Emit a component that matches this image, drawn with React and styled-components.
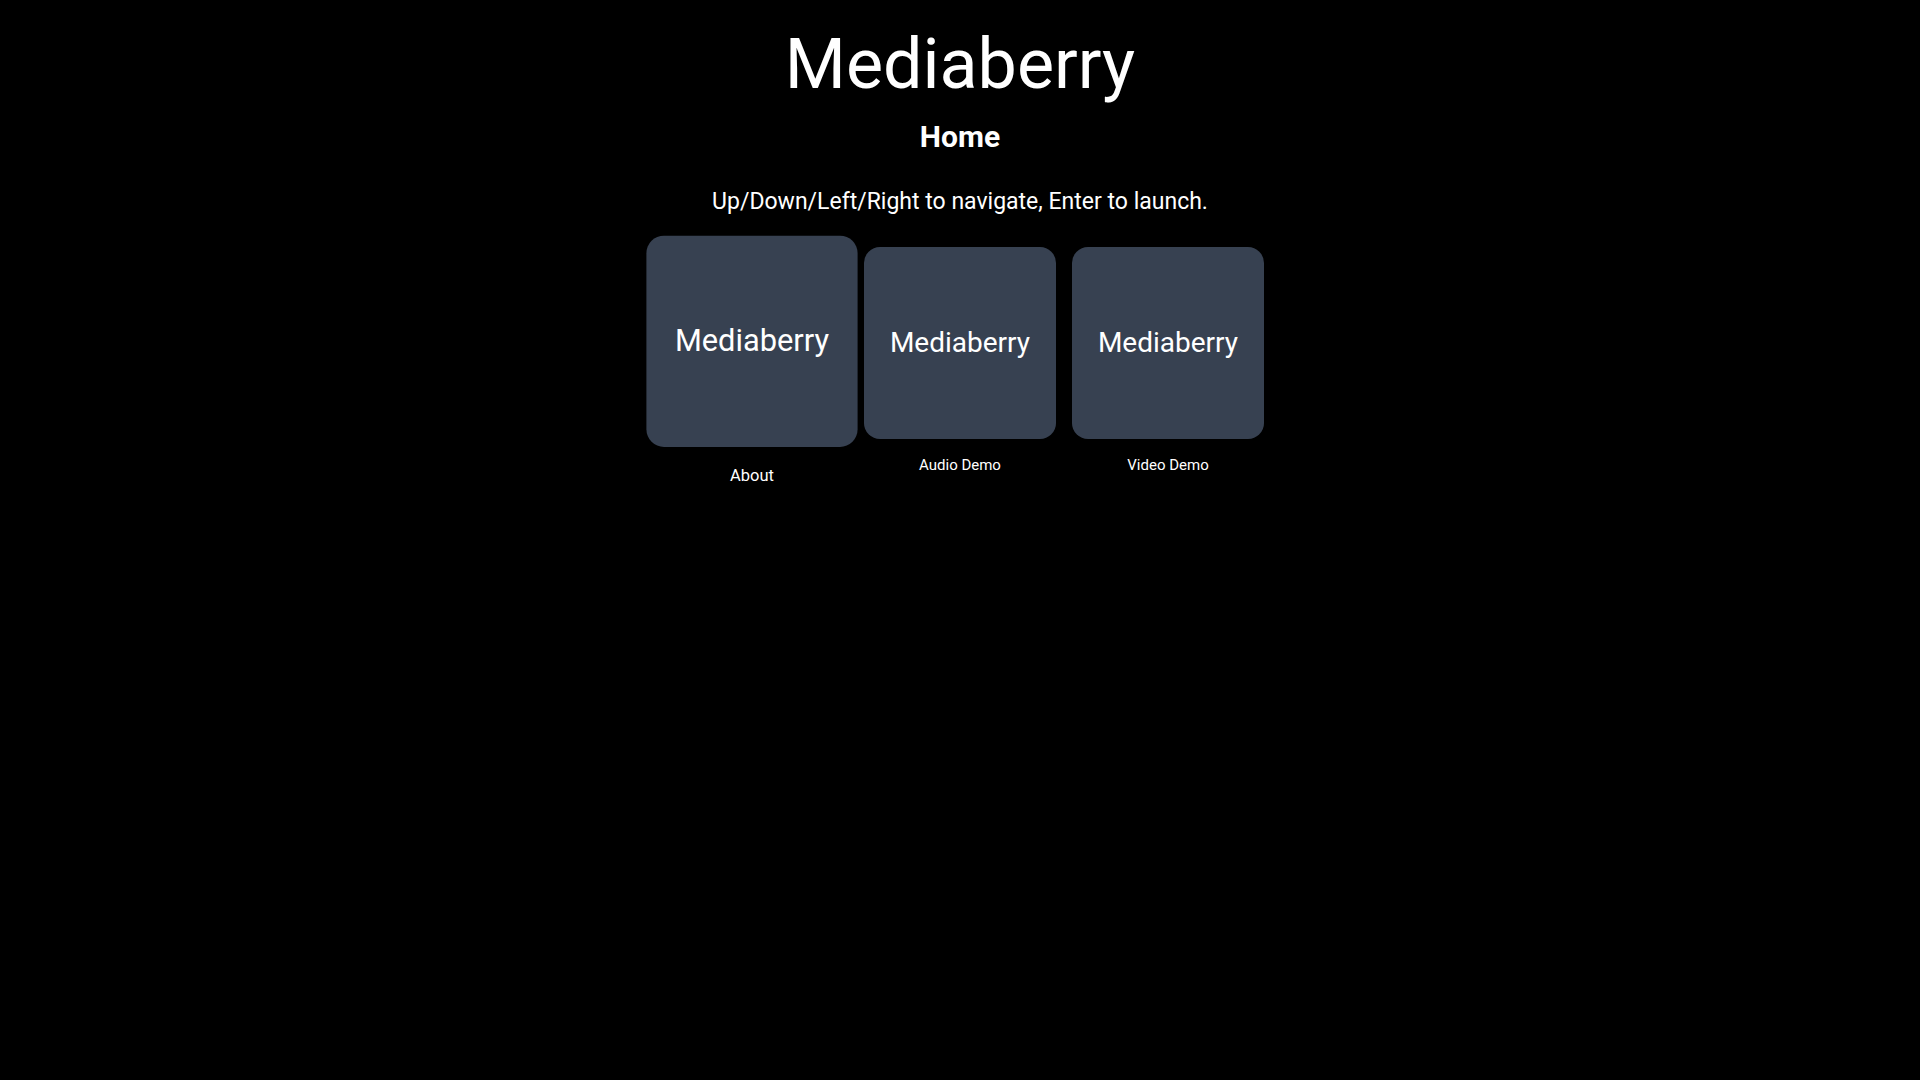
import React, { useEffect, useState } from "react";
import styled, { createGlobalStyle } from "styled-components";

const GlobalStyle = createGlobalStyle`
  *, *::before, *::after { box-sizing: border-box; }
  body {
    margin: 0;
    background: #000;
    color: #fff;
    font-family: Roboto, "Liberation Sans", sans-serif;
    font-weight: 400;
  }
`;

const Page = styled.main`
  display: flex;
  flex-direction: column;
  align-items: center;
  min-height: 100vh;
  padding: 24px 16px;
  text-align: center;
`;

const Wordmark = styled.span`
  display: block;
  font-size: ${(p) => (p.$large ? 70 : 28)}px;
  line-height: ${(p) => (p.$large ? 80 : 32)}px;
`;

const Title = styled.h1`
  margin: 16px 0 0;
  font-size: 30px;
  line-height: 34px;
  font-weight: 700;
`;

const Hint = styled.p`
  margin: 32px 0 29px;
  font-size: 23px;
  line-height: 32px;
`;

const Launcher = styled.nav`
  display: flex;
  flex-wrap: wrap;
  justify-content: center;
  gap: 16px;
`;

const Tile = styled.button`
  display: flex;
  flex-direction: column;
  align-items: center;
  gap: 18px;
  padding: 0;
  border: 0;
  background: none;
  color: inherit;
  font-family: inherit;
  font-size: 15px;
  font-weight: inherit;
  line-height: 16px;
  cursor: pointer;
  outline: none;
  transform: ${(p) => (p.$active ? "scale(1.1)" : "none")};
`;

const Artwork = styled.span`
  display: flex;
  align-items: center;
  justify-content: center;
  width: 192px;
  height: 192px;
  border-radius: 16px;
  background: #374151;
`;

const apps = ["About", "Audio Demo", "Video Demo"];

export default function App() {
  const [active, setActive] = useState(0);

  useEffect(() => {
    const onKey = (event) => {
      if (event.key === "ArrowRight" || event.key === "ArrowDown") {
        setActive((i) => Math.min(i + 1, apps.length - 1));
      }
      if (event.key === "ArrowLeft" || event.key === "ArrowUp") {
        setActive((i) => Math.max(i - 1, 0));
      }
    };
    window.addEventListener("keydown", onKey);
    return () => window.removeEventListener("keydown", onKey);
  }, []);

  return (
    <>
      <GlobalStyle />
      <Page>
        <Wordmark $large>Mediaberry</Wordmark>
        <Title>Home</Title>
        <Hint>Up/Down/Left/Right to navigate, Enter to launch.</Hint>
        <Launcher>
          {apps.map((name, i) => (
            <Tile key={name} type="button" $active={i === active} onFocus={() => setActive(i)}>
              <Artwork>
                <Wordmark>Mediaberry</Wordmark>
              </Artwork>
              {name}
            </Tile>
          ))}
        </Launcher>
      </Page>
    </>
  );
}
